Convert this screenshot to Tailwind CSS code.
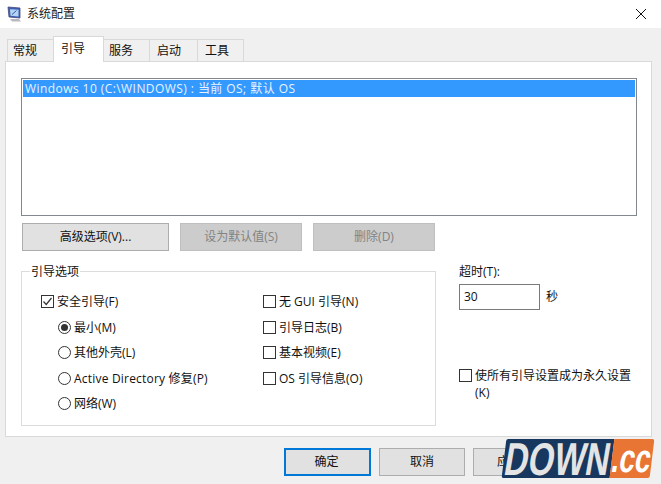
<!DOCTYPE html>
<html lang="zh-CN">
<head>
  <meta charset="UTF-8">
  <title>系统配置</title>
  <script src="https://cdn.jsdelivr.net/npm/@tailwindcss/browser@4"></script>
</head>
<body class="relative w-[661px] h-[484px] overflow-hidden bg-[#f0f0f0] text-[12px] leading-[16px] text-[#111] font-['Open_Sans','Noto_Sans_CJK_SC',sans-serif]">
  <!-- title bar -->
  <header class="h-[28px] bg-white flex items-center pl-[7px] pr-[14px]">
    <svg width="16" height="16" viewBox="0 0 16 16" class="mr-[4px]">
      <path d="M1 1 L13 2 V12 L2 11 Z" fill="#3f5fb5" stroke="#45497a" stroke-width="0.8"/>
      <path d="M3 3.2 L11.5 3.8 V10.4 L3.5 9.8 Z" fill="#b4d4f2"/>
      <path d="M5 8.5 L9.5 4.5" stroke="#2a5fb0" stroke-width="1"/>
      <path d="M3 13 H12 L14 15.5 H5 Z" fill="#b9b9bf"/>
    </svg>
    <span class="text-[#222] -mt-px">系统配置</span>
    <svg width="12" height="12" viewBox="0 0 12 12" class="ml-auto" fill="none" stroke="#111" stroke-width="1">
      <path d="M1 1 L11 11 M11 1 L1 11"/>
    </svg>
  </header>

  <!-- tabs -->
  <nav class="flex items-end h-[33px] pl-[7px] relative z-10">
    <div class="w-[47px] h-[23px] -mb-px border border-[#d9d9d9] border-b-0 flex items-center pl-[5px]">常规</div>
    <div class="w-[51px] h-[26px] -mb-[1px] -ml-px bg-white border border-[#d9d9d9] border-b-0 flex items-center pl-[7px] pb-[2px]">引导</div>
    <div class="w-[47px] h-[23px] -mb-px -ml-px border border-[#d9d9d9] border-b-0 border-l-0 flex items-center pl-[6px]">服务</div>
    <div class="w-[48px] h-[23px] -mb-px border border-[#d9d9d9] border-b-0 border-l-0 flex items-center pl-[7px]">启动</div>
    <div class="w-[46px] h-[23px] -mb-px border border-[#d9d9d9] border-b-0 border-l-0 flex items-center pl-[7px]">工具</div>
  </nav>

  <!-- tab panel -->
  <main class="ml-[5px] w-[647px] h-[376px] bg-white border border-[#d9d9d9] pl-[15px] pt-[16px]">
    <div class="w-[616px] h-[138px] border border-[#828790] p-px">
      <div class="h-[17px] bg-[#3399ff] text-[#e8f3ff] pl-[2px] leading-[17px] tracking-[0.43px]">Windows 10 (C:\WINDOWS) : 当前 OS; 默认 OS</div>
    </div>

    <div class="flex mt-[7px] ml-px gap-[11px]">
      <button class="w-[147px] h-[28px] bg-[#e1e1e1] border border-[#adadad]">高级选项(V)...</button>
      <button class="w-[122px] h-[28px] bg-[#cccccc] border border-[#bfbfbf] text-[#838383]">设为默认值(S)</button>
      <button class="w-[122px] h-[28px] bg-[#cccccc] border border-[#bfbfbf] text-[#838383]">删除(D)</button>
    </div>

    <div class="flex mt-[20px]">
      <!-- boot options group -->
      <fieldset class="relative w-[415px] h-[155px] border border-[#dcdcdc] pt-[23px] pl-[19px]">
        <span class="absolute -top-[8px] left-[8px] bg-white px-px">引导选项</span>
        <div class="flex">
          <div class="w-[222px] flex flex-col">
            <label class="flex items-center h-[13px] gap-[3px]">
              <span class="w-[13px] h-[13px] border border-[#333] flex items-center justify-center shrink-0">
                <svg width="11" height="11" viewBox="0 0 11 11" fill="none" stroke="#333" stroke-width="1.2"><path d="M1.5 5.5 L4.2 8.5 L9.5 2"/></svg>
              </span>安全引导(F)
            </label>
            <label class="flex items-center h-[13px] mt-[13px] ml-[17px] gap-[3px]">
              <span class="w-[13px] h-[13px] rounded-full border border-[#333] flex items-center justify-center shrink-0"><span class="w-[7px] h-[7px] rounded-full bg-[#333]"></span></span>最小(M)
            </label>
            <label class="flex items-center h-[13px] mt-[12px] ml-[17px] gap-[3px]">
              <span class="w-[13px] h-[13px] rounded-full border border-[#333] shrink-0"></span>其他外壳(L)
            </label>
            <label class="flex items-center h-[13px] mt-[13px] ml-[17px] gap-[3px] tracking-[0.2px]">
              <span class="w-[13px] h-[13px] rounded-full border border-[#333] shrink-0"></span>Active Directory 修复(P)
            </label>
            <label class="flex items-center h-[13px] mt-[12px] ml-[17px] gap-[3px]">
              <span class="w-[13px] h-[13px] rounded-full border border-[#333] shrink-0"></span>网络(W)
            </label>
          </div>
          <div class="flex flex-col">
            <label class="flex items-center h-[13px] gap-[3px]"><span class="w-[13px] h-[13px] border border-[#333] shrink-0"></span>无 GUI 引导(N)</label>
            <label class="flex items-center h-[13px] mt-[13px] gap-[3px]"><span class="w-[13px] h-[13px] border border-[#333] shrink-0"></span>引导日志(B)</label>
            <label class="flex items-center h-[13px] mt-[12px] gap-[3px]"><span class="w-[13px] h-[13px] border border-[#333] shrink-0"></span>基本视频(E)</label>
            <label class="flex items-center h-[13px] mt-[13px] gap-[3px]"><span class="w-[13px] h-[13px] border border-[#333] shrink-0"></span>OS 引导信息(O)</label>
          </div>
        </div>
      </fieldset>

      <!-- timeout column -->
      <div class="ml-[23px] w-[180px] -mt-[7px]">
        <div>超时(T):</div>
        <div class="flex items-center mt-[4px]">
          <div class="w-[81px] h-[26px] border border-[#7a7a7a] pl-[4px] leading-[24px]">30</div>
          <span class="ml-[6px]">秒</span>
        </div>
        <label class="flex mt-[57px] gap-[3px]">
          <span class="w-[13px] h-[13px] border border-[#333] shrink-0 mt-[2px]"></span>
          <span class="w-[165px] leading-[17px]">使所有引导设置成为永久设置(K)</span>
        </label>
      </div>
    </div>
  </main>

  <!-- dialog buttons -->
  <footer class="flex mt-[11px] ml-[284px] gap-[8px]">
    <button class="w-[87px] h-[28px] bg-[#e1e1e1] border-2 border-[#0078d7] pr-[2px]">确定</button>
    <button class="w-[86px] h-[28px] bg-[#e1e1e1] border border-[#adadad]">取消</button>
    <button class="w-[78px] h-[28px] bg-[#e1e1e1] border border-[#adadad] text-left pl-[23px]">应用</button>
    <button class="w-[86px] h-[28px] bg-[#e1e1e1] border border-[#adadad]">帮助</button>
  </footer>

  <!-- watermark logo -->
  <div class="absolute left-[504px] top-[439px] w-[148px] h-[39px] flex -skew-x-[7deg] font-['Liberation_Sans',sans-serif] font-bold whitespace-nowrap">
    <div class="w-[108px] shrink-0 bg-[#17375e] rounded-l-[2px] flex items-center justify-center text-[46px] leading-none text-[#e4e4e4]">
      <span class="shrink-0 scale-x-[0.72] -skew-x-[4deg]">DOWN</span>
    </div>
    <div class="w-[40px] shrink-0 bg-[#e87533] rounded-r-[2px] flex items-center justify-center text-[40px] leading-none text-white">
      <span class="shrink-0 scale-x-[0.7] -skew-x-[4deg] -mt-[1px]">.cc</span>
    </div>
  </div>
</body>
</html>
